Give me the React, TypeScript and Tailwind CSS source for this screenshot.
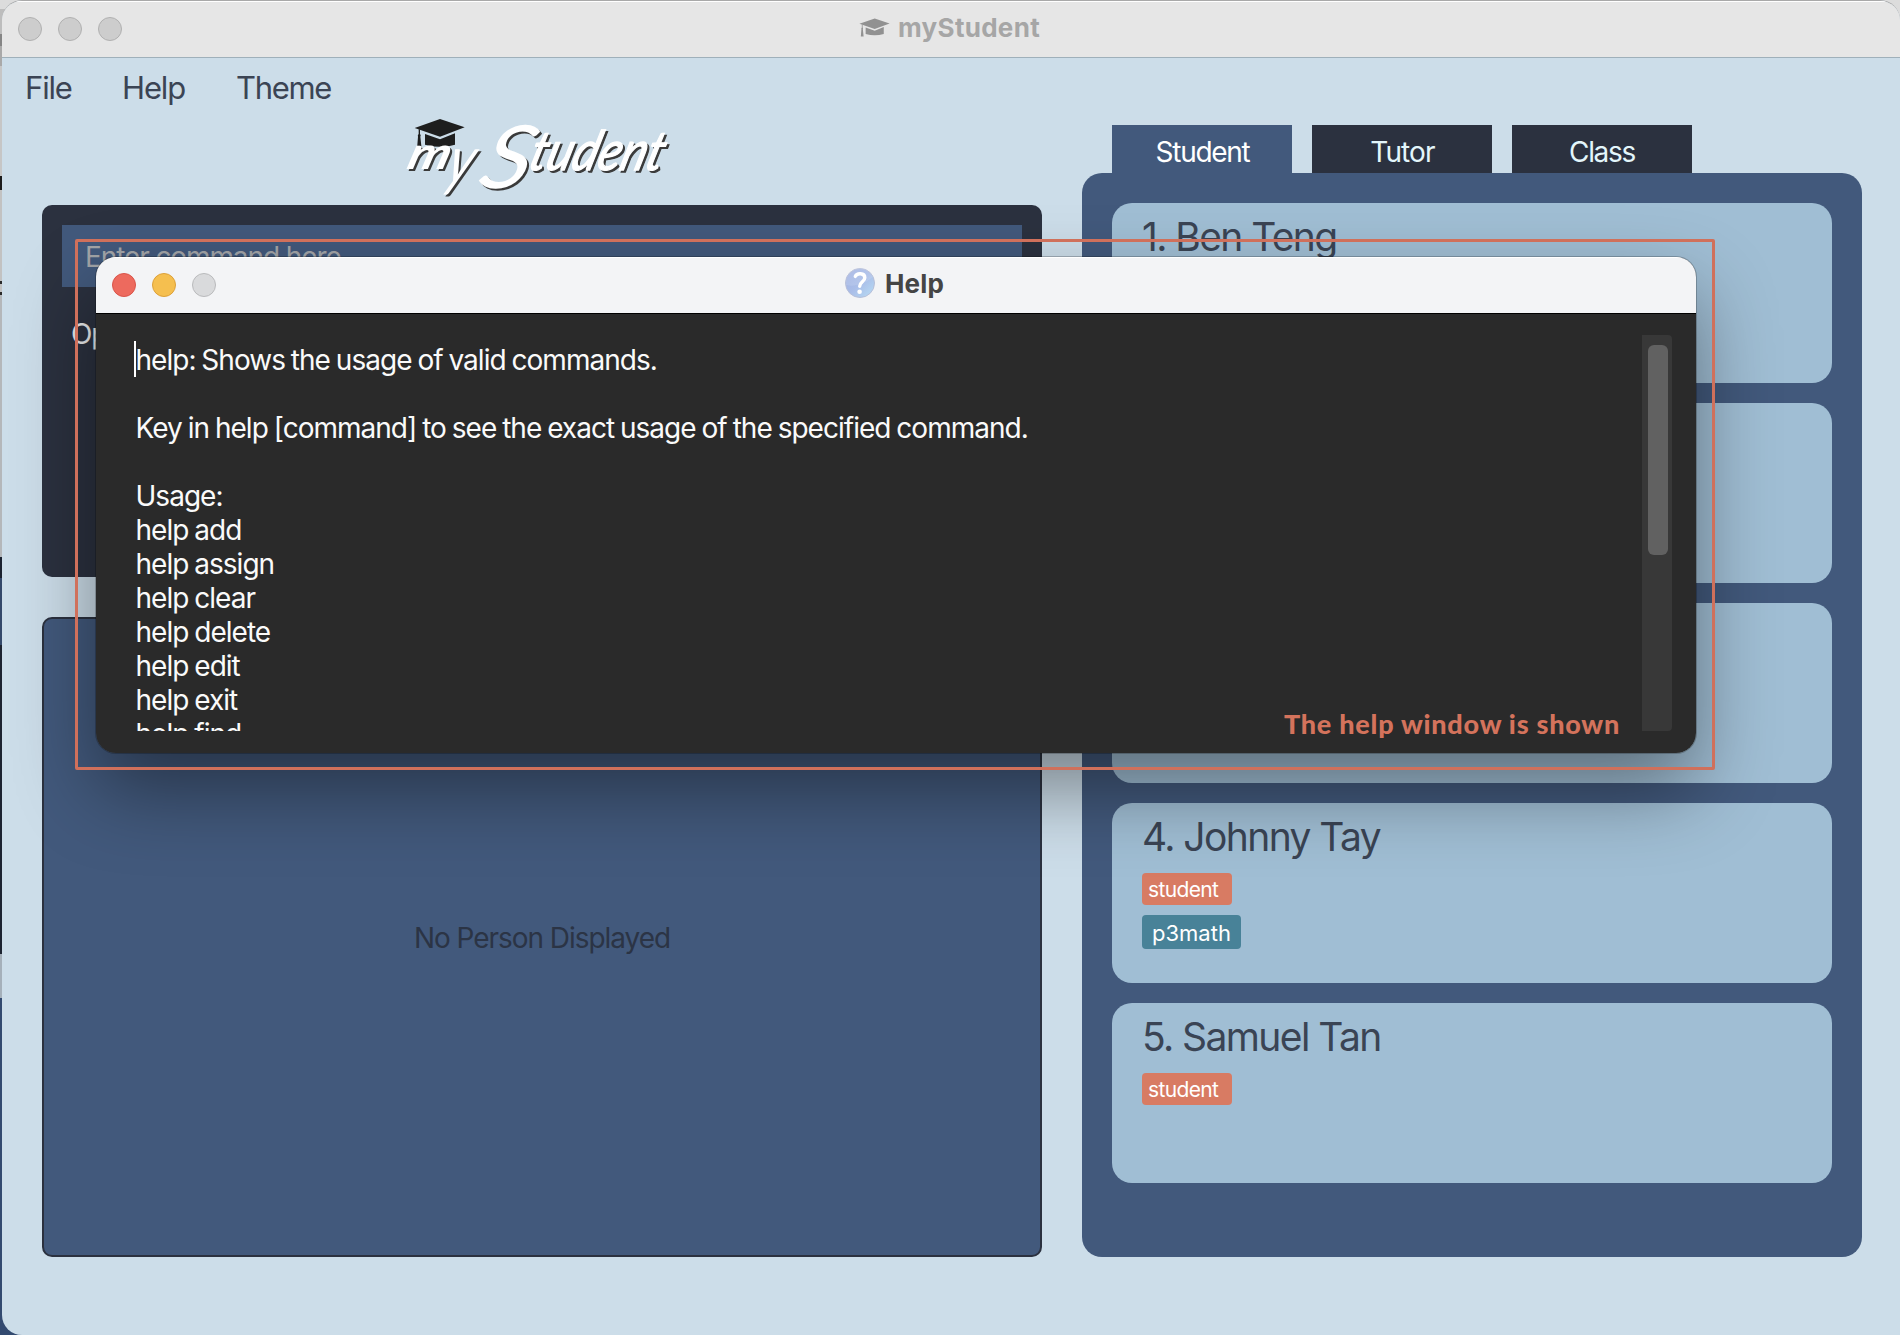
import React from "react";

const backdrop = [
  "h-[9px] bg-[#dcdcdc]",
  "h-[25px] bg-[#bdbdbd]",
  "h-[12px] bg-[#858585]",
  "h-[20px] bg-[#a9a9a9]",
  "h-[110px] bg-[#c6c6c6]",
  "h-[14px] bg-[#1c1c1c]",
  "h-[91px] bg-[#c2c2c2]",
  "h-[3px] bg-[#2a2a2a]",
  "h-[8px] bg-[#c2c2c2]",
  "h-[3px] bg-[#2a2a2a]",
  "h-[262px] bg-[#b4b7ba]",
  "h-[21px] bg-[#1b2230]",
  "h-[67px] bg-[#34496b]",
  "h-[309px] bg-[#1d2431]",
  "h-[44px] bg-[#a5b0ba]",
  "flex-1 bg-[#334a70]",
];

const helpText = [
  "help: Shows the usage of valid commands.",
  "",
  "Key in help [command] to see the exact usage of the specified command.",
  "",
  "Usage:",
  "help add",
  "help assign",
  "help clear",
  "help delete",
  "help edit",
  "help exit",
  "help find",
];

const people = [
  { name: "1. Ben Teng", tags: [] as string[] },
  { name: "", tags: [] as string[] },
  { name: "", tags: [] as string[] },
  { name: "4. Johnny Tay", tags: ["student", "p3math"] },
  { name: "5. Samuel Tan", tags: ["student"] },
];

function CapShape() {
  return (
    <>
      <path d="M104 84 L180 57 L254 82 L180 110 Z" />
      <path d="M135 102 L180 118 L225 100 V134 Q180 147 135 134 Z" />
      <path d="M116 88 h4 v14 q4 4 1 8 l4 37 h-14 l3 -37 q-2 -4 2 -8 Z" />
    </>
  );
}

function LogoWords() {
  return (
    <g fontFamily="Lato" fontStyle="italic" fontWeight="700" transform="skewX(-16)">
      <text x="136" y="207" fontSize="136" textLength="126" lengthAdjust="spacingAndGlyphs">m</text>
      <text transform="translate(262 250) scale(0.8 1)" fontSize="200" fontWeight="400">y</text>
      <text transform="translate(364 264) scale(1.12 1)" fontSize="262" fontWeight="400">S</text>
      <text x="500" y="209" fontSize="164" textLength="400" lengthAdjust="spacingAndGlyphs" fontWeight="400" stroke="currentColor" strokeWidth="4">
        tudent
      </text>
    </g>
  );
}

function Logo() {
  return (
    <svg className="ml-[338px] block h-[105px] w-[320px]" viewBox="0 0 960 315">
      <g fill="#1e1e1e">
        <CapShape />
      </g>
      <g className="text-[#3a3a3a]" fill="#3a3a3a" transform="translate(6 6)">
        <LogoWords />
      </g>
      <g className="text-white" fill="#ffffff">
        <LogoWords />
      </g>
    </svg>
  );
}

function Tag({ label }: { label: string }) {
  if (label === "student") {
    return (
      <span className="flex h-8 w-[90px] items-center rounded-[4px] bg-[#d87b63] pl-[6px] text-[21px] leading-none tracking-[-0.65px] text-white">
        {label}
      </span>
    );
  }
  return (
    <span className="flex h-[34px] w-[99px] items-center rounded-[4px] bg-[#488298] pl-[10px] pt-px text-[22px] leading-none text-white">
      {label}
    </span>
  );
}

function HelpWindow() {
  return (
    <section className="absolute left-24 top-[257px] flex h-[496px] w-[1600px] flex-col overflow-hidden rounded-[20px] bg-[#2a2a2a]">
      <header className="relative flex h-14 items-center justify-center gap-[10px] border-t border-white bg-[#f3f4f6] pb-[4px] pr-[3px]">
        <div className="absolute left-4 top-[15px] flex gap-4">
          <i className="size-6 rounded-full border border-[#d9544a] bg-[#ed6a5e]" />
          <i className="size-6 rounded-full border border-[#dca03a] bg-[#f5bf4f]" />
          <i className="size-6 rounded-full border border-[#b9babc] bg-[#d9dadc]" />
        </div>
        <svg className="-mt-px size-[30px]" viewBox="0 0 30 30">
          <defs>
            <linearGradient id="orb" x1="0" y1="0" x2="1" y2="1">
              <stop offset="0" stopColor="#a3b3e2" />
              <stop offset="0.5" stopColor="#a9bde8" />
              <stop offset="1" stopColor="#b8def5" />
            </linearGradient>
          </defs>
          <circle cx="15" cy="15" r="14.5" fill="url(#orb)" stroke="#b7bfd8" />
          <path d="M1 17 Q15 20 28 9 A14 14 0 0 0 1 13 Z" fill="#ffffff" opacity="0.12" />
          <path d="M10.3 8.4 C11.8 4.8 19.8 4.6 19.8 9.8 C19.8 13.8 14.7 13.9 14.7 18.3" fill="none" stroke="#fff" strokeWidth="3.4" strokeLinecap="round" />
          <circle cx="14.6" cy="23.8" r="2.3" fill="#fff" />
        </svg>
        <h2 className="pt-px text-[26px] font-bold leading-none tracking-[0.2px] text-[#454545]">Help</h2>
      </header>
      <div className="flex flex-1 border-t border-black pb-[22px] pl-[38px] pr-6 pt-[21px]">
        <div className="relative h-[396px] flex-1 overflow-hidden pl-[1.5px] pt-[8px] text-[28px] leading-[34px] tracking-[-0.98px] text-[#fafafa] [word-spacing:-1px]">
          <span className="absolute left-0 top-[6px] h-9 w-[2px] bg-white" />
          {helpText.map((line, i) => (
            <p key={i} className="h-[34px] whitespace-pre">{line}</p>
          ))}
        </div>
        <div className="h-[396px] w-[30px] rounded-r-[4px] bg-[#383838] pl-[6px] pt-[10px]">
          <div className="h-[210px] w-5 rounded-[6px] bg-[#616161]" />
        </div>
      </div>
    </section>
  );
}

export default function App() {
  return (
    <div className="relative h-[1335px] w-[1900px] overflow-hidden bg-[#dcdcdc] font-[Inter,sans-serif]">
      <div className="absolute inset-y-0 left-0 flex w-6 flex-col">
        {backdrop.map((c, i) => (
          <div key={i} className={c} />
        ))}
      </div>

      <main className="relative ml-[2px] flex h-[1335px] flex-col overflow-hidden rounded-t-[20px] rounded-bl-[20px] border-t border-[#a9a9a9] bg-[#ccdde9]">
        <header className="relative flex h-[57px] shrink-0 items-center justify-center gap-[8px] border-b border-t border-b-[#9fb0ba] border-t-white bg-[#e6e6e6] pb-[4px] pr-[2px]">
          <div className="absolute left-4 top-[15px] flex gap-4">
            <i className="size-6 rounded-full border border-[#b0b0b0] bg-[#cdcdcd]" />
            <i className="size-6 rounded-full border border-[#b0b0b0] bg-[#cdcdcd]" />
            <i className="size-6 rounded-full border border-[#b0b0b0] bg-[#cdcdcd]" />
          </div>
          <svg className="-ml-px h-[19px] w-[31px]" viewBox="102 55 154 94" preserveAspectRatio="none" fill="#919191">
            <CapShape />
          </svg>
          <h1 className="text-[26px] font-bold leading-none tracking-[0.3px] text-[#a6a6a6]">myStudent</h1>
        </header>

        <nav className="flex h-[42px] shrink-0 pt-[18px] text-[31px] leading-6 tracking-[-1.15px] text-[#3b4454]">
          <span className="ml-[23px] w-[97px]">File</span>
          <span className="w-[114px]">Help</span>
          <span className="tracking-[-1.3px]">Theme</span>
        </nav>

        <div className="flex gap-10 pl-10">
          <div className="w-[1000px]">
            <Logo />
            <section className="h-[372px] rounded-[10px] bg-[#2b313f] px-5 pt-5">
              <div className="flex h-[62px] items-center bg-[#42597c] pl-[23px] pt-[2px] text-[28px] tracking-[-1.1px] text-[#a3a5a8]">
                Enter command here...
              </div>
              <p className="ml-[9px] mt-[30px] text-[28px] leading-[34px] tracking-[-1.1px] text-[#e8eaec]">Op</p>
            </section>
            <section className="mt-10 flex h-[640px] items-center justify-center rounded-[10px] border-2 border-[#2b313f] bg-[#42597c] pt-[2px] text-[28px] tracking-[-1.05px] text-[#2b3445]">
              No Person Displayed
            </section>
          </div>

          <div className="w-[780px] pt-[25px]">
            <div className="flex gap-5 pl-[30px] text-[28px] tracking-[-1.3px]">
              <div className="flex h-12 w-[180px] items-center justify-center bg-[#42597c] pl-px pt-[5px] text-white">Student</div>
              <div className="flex h-12 w-[180px] items-center justify-center bg-[#2b313f] pl-px pt-[5px] text-[#e3f6fb]">
                <span className="tracking-[-0.9px]">Tutor</span>
              </div>
              <div className="flex h-12 w-[180px] items-center justify-center bg-[#2b313f] pt-[5px] text-[#e3f6fb]">Class</div>
            </div>
            <section className="flex h-[1084px] flex-col gap-5 rounded-[20px] bg-[#42597c] p-[30px]">
              {people.map((p, i) => (
                <article key={i} className="flex h-[180px] flex-col items-start gap-[10px] rounded-[20px] bg-[#a0bed4] pl-[30px] pt-[14px]">
                  <h3 className="mb-[6px] h-10 text-[39px] leading-10 tracking-[-1.6px] text-[#3a4454]">{p.name}</h3>
                  {p.tags.map((t) => (
                    <Tag key={t} label={t} />
                  ))}
                </article>
              ))}
            </section>
          </div>
        </div>
      </main>

      <div className="absolute left-24 top-[257px] h-[496px] w-[1600px] rounded-[20px] shadow-[0_36px_80px_rgba(0,0,0,0.42),0_0_0_1px_rgba(0,0,0,0.22)]" />
      <HelpWindow />
      <div className="absolute left-[75px] top-[239px] h-[531px] w-[1640px] rounded-[2px] border-[3px] border-[#d0705b]" />
      <p className="absolute left-[1284px] top-[708px] whitespace-nowrap font-[Lato,sans-serif] text-[27px] font-black leading-8 tracking-[0.75px] text-[#d4735c]">
        The help window is shown
      </p>
    </div>
  );
}
